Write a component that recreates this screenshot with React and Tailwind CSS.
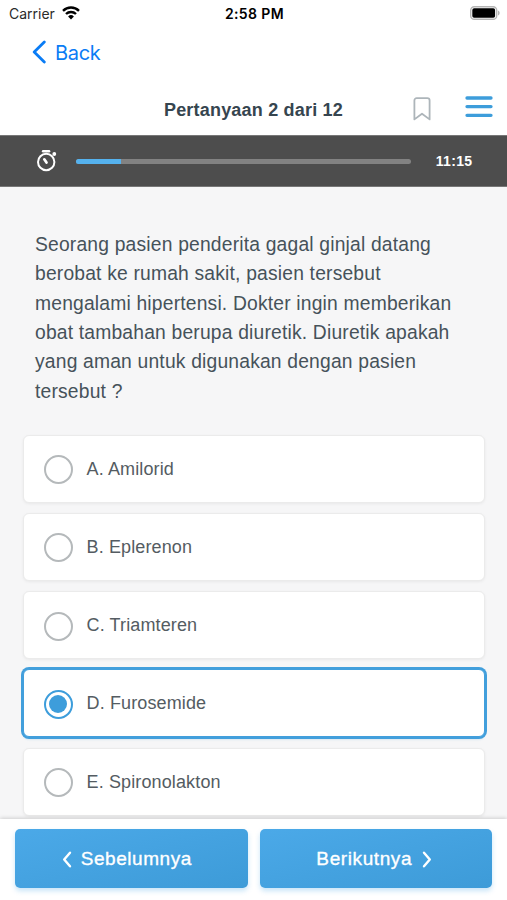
// App.jsx
import React, { useState } from 'react';

const OPTIONS = ['A. Amilorid', 'B. Eplerenon', 'C. Triamteren', 'D. Furosemide', 'E. Spironolakton'];

const QUESTION = [
  'Seorang pasien penderita gagal ginjal datang',
  'berobat ke rumah sakit, pasien tersebut',
  'mengalami hipertensi. Dokter ingin memberikan',
  'obat tambahan berupa diuretik. Diuretik apakah',
  'yang aman untuk digunakan dengan pasien',
  'tersebut ?',
];

function StatusBar() {
  return (
    <div className="grid h-[27px] grid-cols-3 items-center pl-[9px] pr-[7px] font-['Inter',sans-serif] text-black">
      <div className="flex items-center gap-[7px]">
        <span className="text-[14px] text-[#2b2b2b]">Carrier</span>
        <svg className="mt-[-1px]" width="18" height="14" viewBox="0 0 18 14" fill="none" stroke="currentColor" strokeWidth="2.4">
          <path d="M1 4.8a11.5 11.5 0 0 1 16 0" />
          <path d="M4 8a7.2 7.2 0 0 1 10 0" />
          <path d="M9 13.6 6.1 10.5a4.2 4.2 0 0 1 5.8 0Z" fill="currentColor" stroke="none" />
        </svg>
      </div>
      <span className="whitespace-nowrap text-center text-[14px] font-semibold tracking-[0.4px]">2:58 PM</span>
      <svg className="mt-[-1px] justify-self-end" width="30" height="14" viewBox="0 0 30 14">
        <rect x="0.7" y="0.7" width="26" height="12.6" rx="3.6" fill="#fff" stroke="#b5b5b5" strokeWidth="1.4" />
        <rect x="2.3" y="2.3" width="22.8" height="9.4" rx="1.8" />
        <path d="M28 4.6c2.2.8 2.2 4 0 4.8Z" fill="#b5b5b5" />
      </svg>
    </div>
  );
}

function Header() {
  return (
    <header className="h-[108px] bg-white">
      <button className="ml-[32px] flex h-[52px] items-center gap-[9px] text-[#0a7cf5]">
        <svg className="mt-[-2px]" width="14" height="24" viewBox="0 0 14 24" fill="none" stroke="currentColor" strokeWidth="2.8" strokeLinecap="round" strokeLinejoin="round">
          <path d="M12.3 2 2.2 12l10.1 10" />
        </svg>
        <span className="mt-[-1px] font-['Inter',sans-serif] text-[20px] tracking-[-0.3px]">Back</span>
      </button>
      <div className="grid h-[56px] grid-cols-[1fr_auto_1fr] items-center pr-[14px] pl-[14px]">
        <h1 className="col-start-2 pt-[6px] text-[18px] font-bold tracking-[0.2px] text-[#36454f]">
          Pertanyaan 2 dari 12
        </h1>
        <div className="flex items-center justify-end gap-[34px]">
          <svg className="mt-[3px]" width="18" height="24" viewBox="0 0 18 24" fill="none" stroke="#adb5ba" strokeWidth="1.8" strokeLinejoin="round">
            <path d="M1.4 22.4V3.4a2.3 2.3 0 0 1 2.3-2.3h10.6a2.3 2.3 0 0 1 2.3 2.3v19L9 16.7Z" />
          </svg>
          <svg className="mt-[-1px]" width="28" height="22" viewBox="0 0 28 22" stroke="#3d9ddb" strokeWidth="3.3" strokeLinecap="round">
            <path d="M2 2h24M2 10.6h24M2 19.3h24" />
          </svg>
        </div>
      </div>
    </header>
  );
}

function TimerBar({ progress, time }) {
  return (
    <div className="flex h-[52px] items-center border-y border-[#777] bg-[#4d4d4d] pl-[36px] pr-[34.5px]">
      <svg width="21" height="24" viewBox="0 0 21 24" fill="none" stroke="#fff" strokeLinecap="round">
        <circle cx="10.2" cy="13" r="8.2" strokeWidth="2" />
        <path d="M7.1 2.2h6" strokeWidth="2.4" />
        <path d="m8.3 10.3 2.2 3.3" strokeWidth="2.7" />
        <circle cx="18.3" cy="5" r="1.9" fill="#fff" stroke="none" />
      </svg>
      <div className="ml-[18.5px] h-[5px] w-[335px] overflow-hidden rounded-full bg-[#828282]">
        <div className="h-full bg-[#55b2ee]" style={{ width: `${progress}%` }} />
      </div>
      <span className="ml-auto text-[14px] font-bold tracking-[0.35px] text-white">{time}</span>
    </div>
  );
}

function Option({ label, selected, onSelect }) {
  return (
    <button
      onClick={onSelect}
      className={`flex h-[68px] w-full shrink-0 items-center rounded-[6px] border bg-white pl-[20px] text-left ${
        selected
          ? 'border-[#429fdc] shadow-[0_0_0_2px_#429fdc,0_3px_2px_rgba(66,159,220,0.15)]'
          : 'border-[#ebebeb] shadow-[0_1px_3px_rgba(0,0,0,0.06)]'
      }`}
    >
      <span
        className={`mt-[2px] flex size-[29px] items-center justify-center rounded-full border-2 ${
          selected ? 'border-[#3d9ddb]' : 'border-[#b5b9bb]'
        }`}
      >
        {selected && <span className="size-[18px] rounded-full bg-[#3d9ddb]" />}
      </span>
      <span className="ml-[14px] pt-[1px] text-[18px] tracking-[0.13px] text-[#545c62]">{label}</span>
    </button>
  );
}

function Chevron({ d }) {
  return (
    <svg width="10" height="17" viewBox="0 0 10 17" fill="none" stroke="currentColor" strokeWidth="2.4" strokeLinecap="round" strokeLinejoin="round">
      <path d={d} />
    </svg>
  );
}

export default function App() {
  const [answer, setAnswer] = useState(3);

  return (
    <div className="flex h-[900px] w-[507px] flex-col overflow-hidden bg-white font-['Liberation_Sans',Arial,sans-serif]">
      <StatusBar />
      <Header />
      <TimerBar progress={13.6} time="11:15" />

      {/* Question and answers */}
      <main className="min-h-0 flex-1 overflow-hidden bg-[#f6f6f7] px-[22.5px] pt-[43px]">
        <p className="pl-[12.5px] text-[19.3px] leading-[29.35px] tracking-[0.18px] text-[#46525a]">
          {QUESTION.map((line) => (
            <span key={line} className="block whitespace-nowrap">{line}</span>
          ))}
        </p>
        <div className="mt-[28.7px] flex flex-col gap-[10.2px]">
          {OPTIONS.map((label, i) => (
            <Option key={label} label={label} selected={answer === i} onSelect={() => setAnswer(i)} />
          ))}
        </div>
      </main>

      {/* Navigation */}
      <footer className="relative grid h-[81px] shrink-0 grid-cols-2 gap-[12px] bg-white px-[15px] pt-[10px] pb-[12px] text-[19px] font-medium text-white shadow-[0_-1px_4px_rgba(0,0,0,0.16)]">
        <button className="flex items-center justify-center gap-[9px] rounded-[5px] bg-linear-to-br from-[#4ba9e8] to-[#3d9bd8] pt-[1px] pr-[9px] shadow-[0_3px_5px_rgba(75,169,232,0.3)]">
          <Chevron d="M8 1.7 2.2 8.5 8 15.3" />
          <span className="tracking-[0.55px] [-webkit-text-stroke:0.35px_white]">Sebelumnya</span>
        </button>
        <button className="flex items-center justify-center gap-[10px] rounded-[5px] bg-linear-to-br from-[#4ba9e8] to-[#3d9bd8] pt-[1px] pr-[3px] shadow-[0_3px_5px_rgba(75,169,232,0.3)]">
          <span className="tracking-[0.6px] [-webkit-text-stroke:0.35px_white]">Berikutnya</span>
          <Chevron d="M2 1.7 7.8 8.5 2 15.3" />
        </button>
      </footer>
    </div>
  );
}
